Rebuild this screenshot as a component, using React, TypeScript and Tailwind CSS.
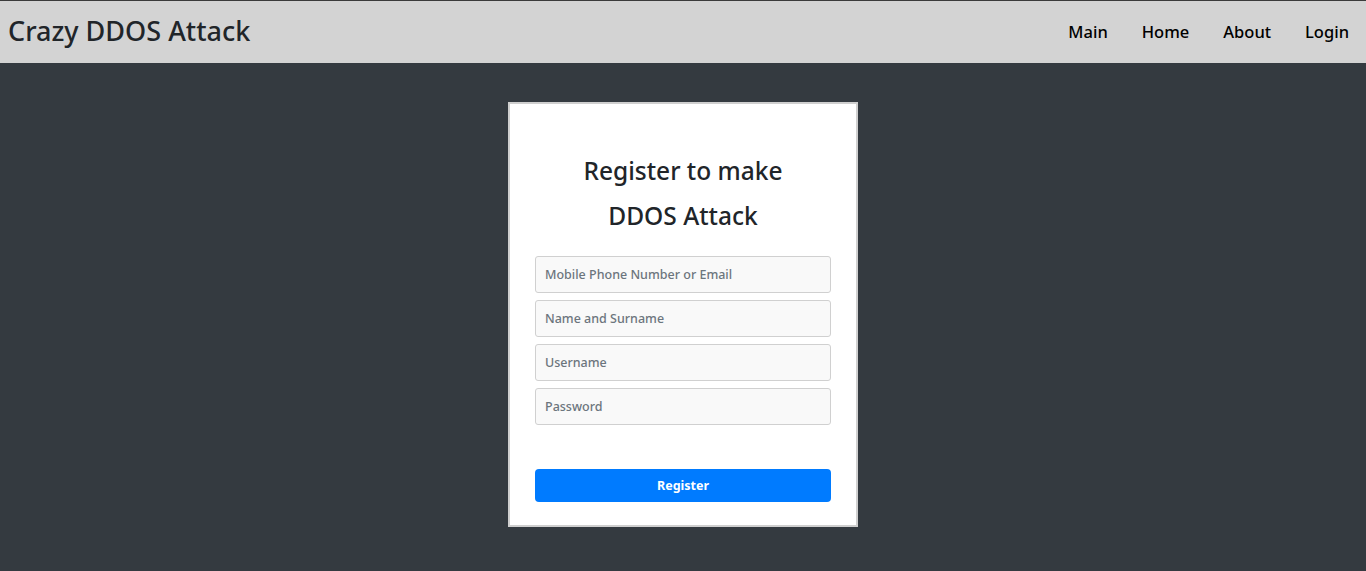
export default function App() {
  const fields = [
    "Mobile Phone Number or Email",
    "Name and Surname",
    "Username",
    "Password",
  ];
  return (
    <div
      className="min-h-screen bg-[#343a40]"
      style={{ fontFamily: '"Noto Sans", "Open Sans", sans-serif' }}
    >
      <nav className="flex h-[63px] items-center justify-between border-t border-[#3a3a3a] bg-[#d3d3d3] pl-2">
        <div className="-mt-[4px] text-[27px] font-medium leading-none text-[#212529]">
          Crazy DDOS Attack
        </div>
        <ul className="flex items-center">
          {["Main", "Home", "About", "Login"].map((l) => (
            <li key={l} className="px-[17px] text-[16.5px] font-medium text-black">
              {l}
            </li>
          ))}
        </ul>
      </nav>
      <main className="flex justify-center pt-[39px]">
        <div className="w-[350px] border-2 border-[#cfcfcf] bg-white px-[25px] pt-[44px] pb-[23px]">
          <h3 className="text-center text-[24.5px] font-medium leading-[45px] text-[#212529]">
            Register to make
            <br />
            DDOS Attack
          </h3>
          <div className="mt-[18px] flex flex-col gap-[7px]">
            {fields.map((f) => (
              <input
                key={f}
                type={f === "Password" ? "password" : "text"}
                placeholder={f}
                className="h-[37px] w-full rounded-[3px] border border-[#d0d0d0] bg-[#f9f9f9] px-[9px] text-[12.5px] font-medium text-[#495057] outline-none placeholder:text-[#6c757d]"
              />
            ))}
          </div>
          <button className="mt-[44px] h-[33px] w-full rounded-[4px] bg-[#007bff] pt-[2px] text-[12.5px] font-bold text-white">
            Register
          </button>
        </div>
      </main>
    </div>
  );
}
